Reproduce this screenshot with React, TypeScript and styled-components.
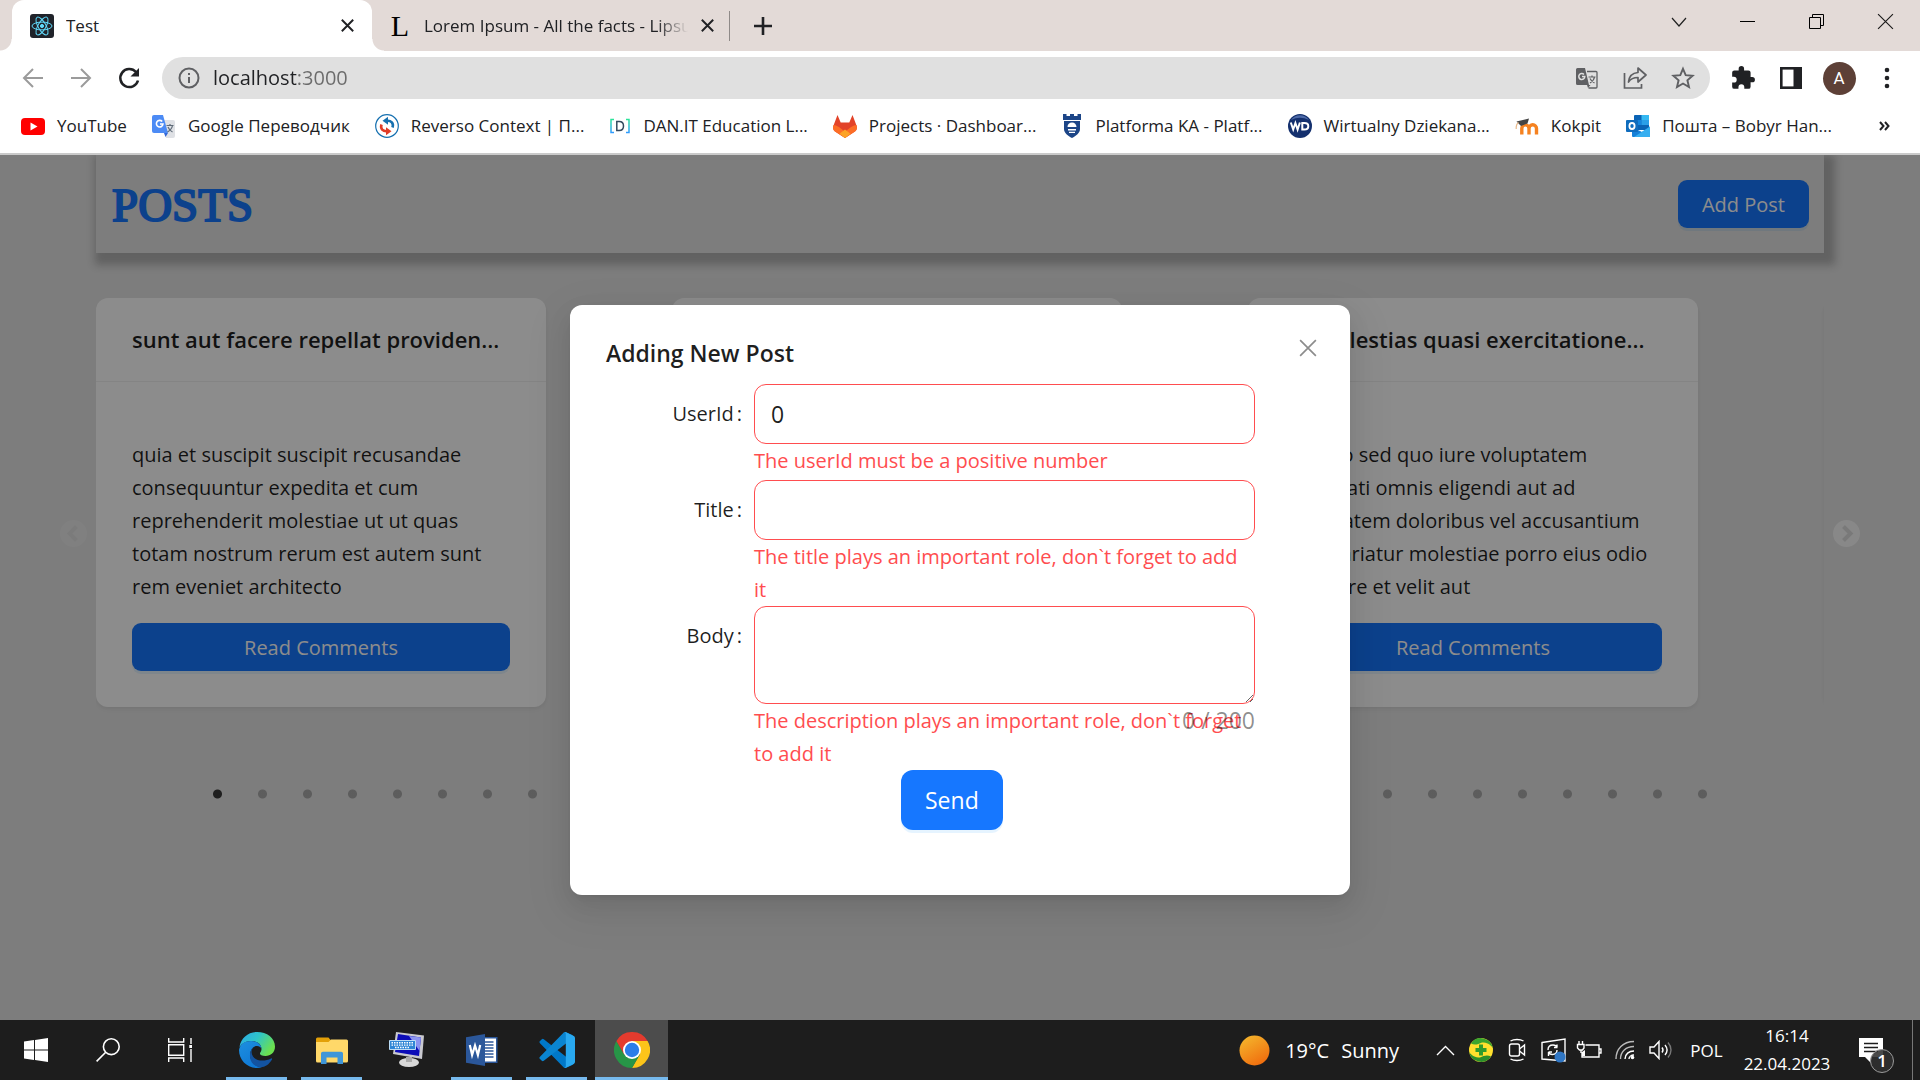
import React, { useState } from "react";
import styled, { createGlobalStyle, css } from "styled-components";

const SANS = `"Open Sans", "Noto Sans", "Liberation Sans", sans-serif`;

const GlobalStyle = createGlobalStyle`
  *, *::before, *::after { box-sizing: border-box; }
  body {
    margin: 0;
    font-family: ${SANS};
    color: rgba(0, 0, 0, 0.88);
    background: #e3e3e3;
  }
  button, input, textarea { font-family: inherit; }
`;

const Screen = styled.div`
  min-height: 100vh;
  display: flex;
  flex-direction: column;
`;

const PlainButton = styled.button`
  display: flex;
  align-items: center;
  justify-content: center;
  padding: 0;
  border: 0;
  background: none;
  color: inherit;
  cursor: pointer;
`;

/* ---------- Browser frame ---------- */

const BrowserFrame = styled.header`
  background: #fff;
  border-bottom: 2px solid #cacaca;
`;

const TabStrip = styled.div`
  display: flex;
  align-items: center;
  height: 51px;
  padding-left: 12px;
  background: #e3dad7;
`;

const Tab = styled.div<{ $active?: boolean }>`
  position: relative;
  display: flex;
  align-items: center;
  gap: 12px;
  align-self: stretch;
  width: ${(p) => (p.$active ? 360 : 358)}px;
  padding: 0 ${(p) => (p.$active ? 18 : 16)}px 0 ${(p) => (p.$active ? 18 : 16)}px;
  color: #202124;
  ${(p) =>
    p.$active
      ? css`
          background: #fff;
          border-radius: 12px 12px 0 0;
          &::before,
          &::after {
            content: "";
            position: absolute;
            bottom: 0;
            width: 12px;
            height: 12px;
          }
          &::before {
            left: -12px;
            background: radial-gradient(circle at 0 0, transparent 11px, #fff 12px);
          }
          &::after {
            right: -12px;
            background: radial-gradient(circle at 100% 0, transparent 11px, #fff 12px);
          }
        `
      : css`
          &::after {
            content: "";
            position: absolute;
            right: 0;
            top: 11px;
            width: 1px;
            height: 30px;
            background: #8f8a88;
          }
        `}
`;

const TabTitle = styled.span<{ $fade?: boolean }>`
  flex: 1;
  overflow: hidden;
  white-space: nowrap;
  font-size: 17px;
  line-height: 24px;
  ${(p) => p.$fade && "mask-image: linear-gradient(90deg, #000 88%, transparent);"}
`;

const TabClose = styled(PlainButton)`
  width: 14px;
  height: 24px;
`;

const NewTab = styled(PlainButton)`
  width: 66px;
  height: 50px;
`;

const WindowControls = styled.div`
  display: flex;
  align-self: flex-start;
  margin-left: auto;
`;

const WindowButton = styled(PlainButton)`
  width: 69px;
  height: 43px;
`;

const Toolbar = styled.div`
  display: flex;
  align-items: center;
  padding: 6px 9px;
`;

const ToolButton = styled(PlainButton)<{ $muted?: boolean }>`
  width: 48px;
  height: 42px;
  color: ${(p) => (p.$muted ? "#9b9b9b" : "#202124")};
`;

const Omnibox = styled.div`
  display: flex;
  align-items: center;
  flex: 1;
  height: 42px;
  margin: 0 9px;
  padding: 0 3px;
  border-radius: 21px;
  background: #e0e0e0;
`;

const OmniButton = styled(ToolButton)`
  color: #5f6063;
`;

const Address = styled.input`
  flex: 1;
  min-width: 0;
  padding: 0;
  border: 0;
  outline: none;
  font-size: 20px;
  line-height: 30px;
  color: transparent;
  background: linear-gradient(90deg, #202124 84px, #6b6b6b 84px);
  background-clip: text;
`;

const Avatar = styled.span`
  display: flex;
  align-items: center;
  justify-content: center;
  width: 33px;
  height: 33px;
  border-radius: 50%;
  background: #5d4037;
  color: #fff;
  font-family: Roboto, sans-serif;
  font-size: 17px;
`;

const Bookmarks = styled.nav`
  display: flex;
  align-items: center;
  gap: 25px;
  height: 48px;
  padding: 0 30px 6px 21px;
`;

const Bookmark = styled.a`
  display: flex;
  align-items: center;
  gap: 12px;
  white-space: nowrap;
  font-size: 17px;
  line-height: 24px;
  color: #202124;
  text-decoration: none;
`;

const MoreBookmarks = styled(PlainButton)`
  margin-left: auto;
`;

/* ---------- Posts page ---------- */

const Page = styled.main`
  position: relative;
  flex: 1;
  overflow: hidden;
  background: #e3e3e3;
`;

const PageHeader = styled.div`
  display: flex;
  align-items: center;
  justify-content: space-between;
  height: 98px;
  margin: 0 5%;
  padding: 0 15px 0 16px;
  box-shadow: 5px 6px 8px 6px rgba(0, 0, 0, 0.22);
`;

const PageTitle = styled.h1`
  margin: 0;
  padding-top: 2px;
  font-family: "Liberation Serif", serif;
  font-size: 47px;
  font-weight: 400;
  line-height: 60px;
  color: #1677ff;
  -webkit-text-stroke: 2px #1677ff;
`;

const PrimaryButton = styled.button<{ $large?: boolean; $block?: boolean }>`
  display: ${(p) => (p.$block ? "block" : "inline-block")};
  width: ${(p) => (p.$block ? "100%" : "auto")};
  height: ${(p) => (p.$large ? 60 : 48)}px;
  padding: 0 24px;
  border: 0;
  border-radius: ${(p) => (p.$large ? 12 : 9)}px;
  background: #1677ff;
  box-shadow: 0 3px 0 rgba(5, 145, 255, 0.1);
  color: #fff;
  font-size: ${(p) => (p.$large ? 23 : 20)}px;
  cursor: pointer;
`;

const Carousel = styled.section`
  display: grid;
  grid-template-columns: 5% minmax(0, 1fr) 5%;
  margin-top: 35px;
`;

const ArrowCell = styled.div<{ $side: "left" | "right" }>`
  display: flex;
  align-items: center;
  justify-content: ${(p) => (p.$side === "left" ? "flex-end" : "flex-start")};
  padding: 0 9px;
`;

const ArrowButton = styled(PlainButton)<{ $dim?: boolean }>`
  opacity: ${(p) => (p.$dim ? 0.25 : 0.75)};
`;

const Track = styled.div`
  display: flex;
  overflow: hidden;
  padding: 10px 0 71px;
`;

const Slide = styled.div`
  display: flex;
  flex: 0 0 calc(100% / 3);
`;

const Card = styled.article`
  width: 450px;
  border-radius: 12px;
  background: #fff;
  box-shadow: 0 2px 3px 0 rgba(0, 0, 0, 0.03), 0 2px 9px -2px rgba(0, 0, 0, 0.02),
    0 3px 6px 0 rgba(0, 0, 0, 0.02);
`;

const CardTitle = styled.h2`
  margin: 0;
  padding: 23px 36px 24px;
  border-bottom: 1px solid #f0f0f0;
  overflow: hidden;
  white-space: nowrap;
  font-size: 22px;
  font-weight: 600;
  line-height: 36px;
`;

const CardBody = styled.div`
  padding: 36px;
`;

const CardText = styled.p`
  margin: 20px 0;
  font-size: 20px;
  line-height: 33px;
  white-space: pre-line;
`;

const Dots = styled.ul`
  display: flex;
  justify-content: center;
  margin: 0;
  padding: 0;
  list-style: none;
`;

const Dot = styled.button<{ $active?: boolean }>`
  display: block;
  width: 45px;
  height: 32px;
  padding: 0;
  border: 0;
  background: radial-gradient(circle, #000 4px, transparent 5px);
  opacity: ${(p) => (p.$active ? 0.75 : 0.25)};
`;

/* ---------- Modal ---------- */

const Mask = styled.div`
  position: absolute;
  inset: 0;
  display: flex;
  align-items: flex-start;
  justify-content: center;
  padding: 150px 24px 0;
  background: rgba(0, 0, 0, 0.45);
`;

const Dialog = styled.div`
  position: relative;
  width: 780px;
  padding: 30px 36px 65px;
  border-radius: 12px;
  background: #fff;
  box-shadow: 0 9px 24px 0 rgba(0, 0, 0, 0.08), 0 5px 9px -6px rgba(0, 0, 0, 0.12),
    0 14px 42px 12px rgba(0, 0, 0, 0.05);
`;

const DialogTitle = styled.h2`
  margin: 0 0 13px;
  font-size: 23px;
  font-weight: 600;
  line-height: 36px;
`;

const DialogClose = styled(PlainButton)`
  position: absolute;
  top: 26px;
  right: 26px;
  width: 33px;
  height: 33px;
  color: rgba(0, 0, 0, 0.45);
`;

const Form = styled.form`
  padding-right: 59px;
`;

const Field = styled.div`
  display: grid;
  grid-template-columns: 148px minmax(0, 1fr);
`;

const Label = styled.label`
  padding-right: 12px;
  text-align: right;
  font-size: 20px;
  line-height: 60px;

  &::after {
    content: ":";
    margin-left: 3px;
  }
`;

const Control = styled.div`
  position: relative;
`;

const fieldBox = css`
  display: block;
  width: 100%;
  border: 1px solid #ff4d4f;
  border-radius: 12px;
  outline: none;
  background: #fff;
  color: rgba(0, 0, 0, 0.88);
  font-size: 23px;
`;

const TextInput = styled.input`
  ${fieldBox}
  height: 60px;
  padding: 0 16px;
`;

const TextArea = styled.textarea`
  ${fieldBox}
  height: 98px;
  padding: 10px 16px;
  resize: vertical;
`;

const Counter = styled.span`
  position: absolute;
  right: 0;
  top: 98px;
  font-size: 23px;
  line-height: 33px;
  color: rgba(0, 0, 0, 0.45);
`;

const ErrorText = styled.div`
  min-height: 36px;
  padding-right: 9px;
  font-size: 20px;
  line-height: 33px;
  color: #ff4d4f;
`;

const SubmitRow = styled.div`
  padding-left: 295px;
`;

/* ---------- Taskbar ---------- */

const TaskbarRoot = styled.footer`
  display: flex;
  height: 60px;
  background: #1d1d1d;
  color: #fff;
`;

const SystemButton = styled(PlainButton)`
  width: 72px;
`;

const Apps = styled.div`
  display: flex;
  gap: 2px;
  margin-left: 4px;
`;

const AppButton = styled(PlainButton)<{ $running?: boolean; $focused?: boolean }>`
  width: 73px;
  background: ${(p) => (p.$focused ? "#4c4c4c" : "none")};
  ${(p) =>
    p.$running &&
    css`
      background-image: linear-gradient(#76b9ed, #76b9ed);
      background-repeat: no-repeat;
      background-position: 50% 100%;
      background-size: ${p.$focused ? "100%" : "61px"} 3px;
    `}
`;

const Weather = styled(PlainButton)`
  gap: 15px;
  margin-left: auto;
  padding-right: 28px;
  font-size: 20px;
  white-space: nowrap;
`;

const WeatherText = styled.span`
  display: flex;
  gap: 12px;
`;

const TrayButton = styled(PlainButton)`
  width: 36px;
`;

const Language = styled(PlainButton)`
  width: 55px;
  font-size: 17px;
`;

const Clock = styled.time`
  display: flex;
  flex-direction: column;
  justify-content: center;
  width: 106px;
  text-align: center;
  font-size: 17px;
  line-height: 28px;
`;

const Notifications = styled(PlainButton)`
  position: relative;
  width: 72px;
  padding-right: 10px;
`;

const Badge = styled.span`
  position: absolute;
  left: 30px;
  top: 29px;
  width: 24px;
  height: 24px;
  border: 1px solid #9a9a9a;
  border-radius: 50%;
  background: rgba(48, 48, 48, 0.88);
  font-size: 17px;
  font-weight: 600;
  line-height: 22px;
`;

const ShowDesktop = styled(PlainButton)`
  width: 8px;
  border-left: 1px solid #777;
`;

/* ---------- Icons ---------- */

const CrossIcon = ({ size, stroke }: { size: number; stroke: number }) => (
  <svg width={size} height={size} viewBox="0 0 16 16" fill="none" stroke="currentColor" strokeWidth={stroke}>
    <path d="M1 1l14 14M15 1L1 15" />
  </svg>
);

const ReactIcon = () => (
  <svg width="24" height="24" viewBox="0 0 24 24" fill="none" stroke="#61dafb" strokeWidth="1">
    <rect width="24" height="24" rx="3" fill="#20232a" stroke="none" />
    <ellipse cx="12" cy="12" rx="10" ry="3.9" />
    <ellipse cx="12" cy="12" rx="10" ry="3.9" transform="rotate(60 12 12)" />
    <ellipse cx="12" cy="12" rx="10" ry="3.9" transform="rotate(120 12 12)" />
    <circle cx="12" cy="12" r="1.6" fill="#61dafb" />
  </svg>
);

const LetterIcon = styled.span`
  width: 24px;
  text-align: center;
  font-family: "Liberation Serif", serif;
  font-size: 30px;
  line-height: 24px;
  color: #000;
`;

const YouTubeIcon = () => (
  <svg width="24" height="24" viewBox="0 0 24 24">
    <rect y="4" width="24" height="17" rx="4" fill="#f00" />
    <path d="M9.5 8.5v8l7-4z" fill="#fff" />
  </svg>
);

const GTranslateColor = () => (
  <svg width="24" height="24" viewBox="0 0 24 24">
    <path d="M10 6h11a2 2 0 0 1 2 2v14a2 2 0 0 1-2 2h-7z" fill="#dfe1e5" />
    <path d="M12 19h4l-2.500 4z" fill="#3367d6" />
    <path d="M2 1h9l5 18H2a2 2 0 0 1-2-2V3a2 2 0 0 1 2-2z" fill="#4c8bf5" />
    <path d="M10.200 7.500A3.300 3.300 0 1 0 11 10H8" fill="none" stroke="#fff" strokeWidth="1.600" />
    <path d="M14.500 11.500h7M18 10v1.500M20.500 11.500c-.5 3-2.500 5-5 6.500M16 13c.8 2 2.500 4 4.500 5" fill="none" stroke="#5f6b78" strokeWidth="1.200" />
  </svg>
);

const ReversoIcon = () => (
  <svg width="24" height="24" viewBox="0 0 24 24" fill="none">
    <circle cx="12" cy="12" r="11.300" fill="#fff" stroke="#1670b0" strokeWidth="1.200" />
    <path d="M17.500 13.500c1.500-4.500-1.500-7-5.500-6.700" stroke="#1670b0" strokeWidth="2.600" />
    <path d="M13 2.800v8L7.500 6.800z" fill="#1670b0" />
    <path d="M6.500 10.500c-1.500 4.500 1.500 7 5.500 6.700" stroke="#e03c28" strokeWidth="2.600" />
    <path d="M11 13.200v8l5.500-4z" fill="#e03c28" />
  </svg>
);

const DanIcon = () => (
  <svg width="22" height="24" viewBox="0 0 22 24" fill="none" strokeWidth="1.500">
    <defs>
      <linearGradient id="dan" x1="0" y1="0" x2="0" y2="1">
        <stop offset="0" stopColor="#2be39a" />
        <stop offset="1" stopColor="#2f9bff" />
      </linearGradient>
    </defs>
    <path d="M5 5.500H2v13h3M17 5.500h3v13h-3" stroke="url(#dan)" />
    <path d="M7.800 7.500v9h2.400c2.800 0 4.300-1.800 4.300-4.500s-1.500-4.500-4.300-4.500z" stroke="#34495e" />
  </svg>
);

const GitLabIcon = () => (
  <svg width="24" height="24" viewBox="0 0 24 24">
    <path d="M4.500 1L7.700 8.500h8.600L19.500 1l4 10.500c.9 2.700.1 4.700-1.500 6L12 24 2 17.500C.4 16.200-.4 14.200.5 11.500z" fill="#e24329" />
    <path d="M.5 11c2 0 4 1 5.800 2.300L12 17.800l5.700-4.500C19.500 12 21.500 11 23.500 11c.9 2.700.3 5-1.500 6.500L12 24 2 17.500C.2 16-.4 13.700.5 11z" fill="#fc6d26" />
    <path d="M12 15.500l5.500 4.200L12 24l-5.500-4.300z" fill="#fca326" />
  </svg>
);

const CastleIcon = () => (
  <svg width="22" height="24" viewBox="0 0 22 24">
    <path d="M2 0h3.500v2H9V0h4v2h3.500V0H20v6h-1v9c0 4-4 7-8 9-4-2-8-5-8-9V6H2z" fill="#1c4587" />
    <path d="M3 6.500h16" stroke="#fff" strokeWidth="1" />
    <path d="M6.500 13c0-3 2-4.500 4.500-4.500s4.500 2 4.500 4.500zM7 15h8v1.500H7zM8 17.800h6v1.200H8z" fill="#fff" />
  </svg>
);

const WdIcon = () => (
  <svg width="24" height="24" viewBox="0 0 24 24">
    <circle cx="12" cy="12" r="12" fill="#14306e" />
    <path d="M3 6a11 11 0 0 1 18 0 20 20 0 0 0-18 0z" fill="#4d6aa8" />
    <path d="M2.800 8.500l2.400 7 2.200-6.500 2.200 6.500 2.300-7" fill="none" stroke="#fff" strokeWidth="2" />
    <path d="M14.300 9v6.500h2c2.600 0 4-1.300 4-3.300S18.900 9 16.300 9z" fill="none" stroke="#fff" strokeWidth="2" />
  </svg>
);

const MoodleIcon = () => (
  <svg width="24" height="24" viewBox="0 0 24 24" fill="none">
    <path d="M6.800 20.500v-6a3.600 3.600 0 0 1 7.200 0v6M14 14.500a3.600 3.600 0 0 1 7.500 0v6" stroke="#f58220" strokeWidth="3.400" />
    <path d="M1.500 7.500L14 4.500l-1.500 5-6.500 2.500z" fill="#444" />
    <path d="M3.500 8.500C1.500 10 1 12 1.200 15" stroke="#e8b98a" strokeWidth="1.200" />
  </svg>
);

const OutlookIcon = () => (
  <svg width="24" height="24" viewBox="0 0 24 24">
    <rect x="8" y="1" width="15" height="15" rx="1" fill="#0a63b5" />
    <path d="M8 6h7.500v5H8z" fill="#1385dd" />
    <path d="M15.500 1H23v5h-7.500z" fill="#35b8f1" />
    <path d="M15.500 6H23v5h-7.500z" fill="#2a9fe8" />
    <path d="M6 13l10 5 8-5.500V22a1 1 0 0 1-1 1H7a1 1 0 0 1-1-1z" fill="#1580d8" />
    <path d="M24 12.500V22a1 1 0 0 1-1 1H8z" fill="#35aef0" />
    <rect y="6" width="12" height="12" rx="1" fill="#0f6cbd" />
    <ellipse cx="6" cy="12" rx="2.600" ry="3" fill="none" stroke="#fff" strokeWidth="1.800" />
  </svg>
);

const ArrowIcon = ({ flip }: { flip?: boolean }) => (
  <svg width="22" height="22" viewBox="0 0 22 22" fill="none" stroke="currentColor" strokeWidth="2">
    <path d={flip ? "M1 11h19M11 2l9 9-9 9" : "M21 11H2M11 2l-9 9 9 9"} />
  </svg>
);

const ReloadIcon = () => (
  <svg width="24" height="24" viewBox="0 0 24 24" fill="none">
    <path d="M21 14.500A9 9 0 1 1 19 6" stroke="currentColor" strokeWidth="2.500" />
    <path d="M22 2v8.500h-8.500z" fill="currentColor" />
  </svg>
);

const InfoIcon = () => (
  <svg width="22" height="22" viewBox="0 0 22 22" fill="none" stroke="currentColor" strokeWidth="2">
    <circle cx="11" cy="11" r="9.500" />
    <path d="M11 10v6M11 6v2" />
  </svg>
);

const TranslateIcon = () => (
  <svg width="22" height="22" viewBox="0 0 22 22" fill="none">
    <path d="M11 4.500h9a1 1 0 0 1 1 1V20a1 1 0 0 1-1 1h-7.500" stroke="currentColor" strokeWidth="1.300" />
    <path d="M1.500 1H9l4 17H1.500A1.500 1.500 0 0 1 0 16.500v-14A1.500 1.500 0 0 1 1.500 1zM11 18h3.500L12 21z" fill="currentColor" />
    <path d="M8 7.500A3 3 0 1 0 8.800 9.600H6" stroke="#e0e0e0" strokeWidth="1.500" />
    <path d="M12.500 10h7M16 8.500V10M18.500 10c-.5 3-2 4.500-4.500 6M14 11.500c.8 1.800 2.200 3.300 4.500 4.500" stroke="currentColor" strokeWidth="1.200" />
  </svg>
);

const ShareIcon = () => (
  <svg width="24" height="24" viewBox="0 0 24 24" fill="none" stroke="currentColor" strokeWidth="1.700">
    <path d="M1.500 7v15h17v-4" />
    <path d="M15 2l8 7-8 7v-4.500c-4.500 0-7.500 1.500-9.500 4.500.5-5.500 3.500-9 9.500-9.500z" strokeLinejoin="round" />
  </svg>
);

const StarIcon = () => (
  <svg width="24" height="24" viewBox="0 0 24 24" fill="none" stroke="currentColor" strokeWidth="1.900">
    <path d="M12 2.800l2.700 6.400 6.900.6-5.200 4.500 1.600 6.800-6-3.600-6 3.600 1.600-6.800L2.400 9.800l6.900-.6z" />
  </svg>
);

const PuzzleIcon = () => (
  <svg width="26" height="26" viewBox="0 0 24 24" fill="currentColor">
    <path d="M20.500 11H19V7a2 2 0 0 0-2-2h-4V3.500a2.500 2.500 0 0 0-5 0V5H4a2 2 0 0 0-2 2v3.800h1.500a2.700 2.700 0 0 1 0 5.400H2V20a2 2 0 0 0 2 2h3.800v-1.500a2.700 2.700 0 0 1 5.400 0V22H17a2 2 0 0 0 2-2v-4h1.500a2.500 2.500 0 0 0 0-5z" />
  </svg>
);

const SidePanelIcon = () => (
  <svg width="22" height="22" viewBox="0 0 22 22">
    <rect x="1.300" y="1.300" width="19.400" height="19.400" fill="none" stroke="currentColor" strokeWidth="2.600" />
    <path d="M13.500 0H22v22h-8.500z" fill="currentColor" />
  </svg>
);

const MenuDots = () => (
  <svg width="6" height="22" viewBox="0 0 6 22" fill="currentColor">
    <circle cx="3" cy="3" r="2.300" />
    <circle cx="3" cy="11" r="2.300" />
    <circle cx="3" cy="19" r="2.300" />
  </svg>
);

const DoubleChevron = () => (
  <svg width="11" height="10" viewBox="0 0 11 10" fill="none" stroke="#202124" strokeWidth="2">
    <path d="M1 1l3.500 4L1 9M6 1l3.500 4L6 9" />
  </svg>
);

const CircleArrow = ({ left }: { left?: boolean }) => (
  <svg width="27" height="27" viewBox="0 0 27 27" fill="none">
    <circle cx="13.500" cy="13.500" r="13.500" fill="#fff" />
    <path d={left ? "M16.500 6.500l-7 7 7 7" : "M10.500 6.500l7 7-7 7"} stroke="#dcdcdc" strokeWidth="4" />
  </svg>
);

const WindowsIcon = () => (
  <svg width="24" height="24" viewBox="0 0 24 24" fill="#fff">
    <path d="M0 3.400L10 2v9.500H0zM11 1.900L24 0v11.500H11zM0 12.500h10V22L0 20.600zM11 12.500h13V24l-13-1.900z" />
  </svg>
);

const SearchIcon = () => (
  <svg width="24" height="24" viewBox="0 0 24 24" fill="none" stroke="#fff" strokeWidth="1.600">
    <circle cx="15.300" cy="8.700" r="7.900" />
    <path d="M9.700 14.300L.6 23.400" />
  </svg>
);

const TaskViewIcon = () => (
  <svg width="24" height="24" viewBox="0 0 24 24" fill="none" stroke="#fff" strokeWidth="1.400">
    <path d="M.7 0v4h15V0M.7 24v-4h15v4M.7 6.700h15v10.600H.7zM23 0v6M23 11v13" />
    <path d="M21.300 7h3v3h-3z" fill="#fff" stroke="none" />
  </svg>
);

const EdgeIcon = () => (
  <svg width="36" height="36" viewBox="0 0 36 36">
    <defs>
      <linearGradient id="edgeTop" x1="0" y1="0" x2="1" y2=".5">
        <stop offset="0" stopColor="#2aa7ea" />
        <stop offset=".5" stopColor="#2fc5c8" />
        <stop offset="1" stopColor="#6be04f" />
      </linearGradient>
      <linearGradient id="edgeLeft" x1="0" y1="0" x2=".6" y2="1">
        <stop offset="0" stopColor="#1d8fe0" />
        <stop offset="1" stopColor="#0f78d4" />
      </linearGradient>
    </defs>
    <path d="M.5 15C2 6 9 0 18 0c10 0 18 6 18 14.500 0 6-4.500 9.500-9.500 9.500-4 0-6-1.500-5.500-3 1-1.500 1.500-2.500 1.500-4 0-5-4.500-8-10-8-6 0-10 3-12 6z" fill="url(#edgeTop)" />
    <path d="M0 18C1 12 6 9 12 9c5.500 0 10.500 3 10.500 8 0-2-3-3.500-5.500-3-4 1-7 6-5.500 12 1.500 5.500 6 9 11.500 9.200-1.500.5-3.200.8-5 .8C8 36 0 28 0 18z" fill="url(#edgeLeft)" />
    <path d="M14.500 15c-2.500 3-2.500 6.500-.5 9.500 3 4.500 11.500 5.500 18 2 .8-.4 1.500.2 1 1C30 32.500 26 35.200 22 35.200 16 35 11.500 31 11 25c-.3-4 .8-7.500 3.500-10z" fill="#1353a0" />
  </svg>
);

const FolderIcon = () => (
  <svg width="32" height="27" viewBox="0 0 32 27">
    <path d="M0 2a1.500 1.500 0 0 1 1.500-1.500h11L15 3.500V7H0z" fill="#e3a008" />
    <path d="M0 5h12.500L15 2.500h15.500A1.500 1.500 0 0 1 32 4v20a1.500 1.500 0 0 1-1.500 1.500h-29A1.500 1.500 0 0 1 0 24z" fill="#ffd869" />
    <path d="M5 27V16.500A1.800 1.800 0 0 1 6.800 14.700h18.400a1.800 1.800 0 0 1 1.800 1.800V27h-5.500v-6.500h-11V27z" fill="#3f96d8" />
  </svg>
);

const KeyboardPcIcon = () => (
  <svg width="36" height="36" viewBox="0 0 36 36">
    <path d="M7 0l28 3.500L33 27 4 22z" fill="#c9c9cf" />
    <path d="M9 2l23 3.500-2 18.500L6 20z" fill="#0c0cb8" />
    <path d="M20 4l12 1.500-1.500 13.500z" fill="#8b94f0" />
    <ellipse cx="20" cy="30.500" rx="10" ry="4.500" fill="#d8d8d8" />
    <path d="M17 25h6v5h-6z" fill="#aaa" />
    <path d="M.5 8.500h26v9H.5z" fill="#2f86d6" stroke="#bcdcf6" />
    <path d="M2.500 10.700h22M2.500 13.100h22M6 15.500h15" stroke="#fff" strokeWidth="1.400" strokeDasharray="1.500 1" />
  </svg>
);

const WordIcon = () => (
  <svg width="32" height="32" viewBox="0 0 32 32">
    <path d="M17 3h14.500v26H17z" fill="#2b579a" />
    <path d="M17 4.500h13v23H17z" fill="#fff" />
    <path d="M19 8h8.500M19 11h8.500M19 14h8.500M19 17h8.500M19 20h8.500M19 23h8.500" stroke="#2b579a" strokeWidth="1.600" />
    <path d="M0 3.300L19 0v32L0 28.700z" fill="#2b579a" />
    <path d="M3.800 11l2.300 10L9 11.500l2.900 9.500L14.200 11" fill="none" stroke="#fff" strokeWidth="2.200" />
  </svg>
);

const VsCodeIcon = () => (
  <svg width="36" height="36" viewBox="0 0 36 36">
    <path d="M1 11.200a1.600 1.600 0 0 1 0-2.300l1.800-1.600a1.500 1.500 0 0 1 2 0L34 30.200c1 1 0 2.300-.8 2.700L27 35.700a2.200 2.200 0 0 1-2.500-.5z" fill="#0078c8" />
    <path d="M1 24.800a1.600 1.600 0 0 0 0 2.300l1.800 1.600a1.500 1.500 0 0 0 2 0L34 6c0-1.500 0-2.300-.8-2.900L27 .3a2.200 2.200 0 0 0-2.500.5z" fill="#0a85d1" />
    <path d="M24.500.8C25.300 0 26.300 0 27 .3l7.800 3.700A2.200 2.200 0 0 1 36 6v24a2.200 2.200 0 0 1-1.200 2L27 35.700c-.9.400-1.800.2-2.500-.5.900.9 2.300.3 2.300-1V1.800c0-1.300-1.400-1.900-2.300-1z" fill="#29a9f0" />
  </svg>
);

const ChromeIcon = () => (
  <svg width="36" height="36" viewBox="0 0 36 36">
    <path d="M18 9h15.590A18 18 0 0 1 18 36l7.800-13.500z" fill="#fcc419" />
    <path d="M10.200 22.500L2.410 9A18 18 0 0 0 18 36l7.800-13.500z" fill="#279547" />
    <path d="M10.200 22.500L2.410 9A18 18 0 0 1 33.590 9H18z" fill="#e33b2e" />
    <circle cx="18" cy="18" r="9" fill="#fff" />
    <circle cx="18" cy="18" r="7.200" fill="#2b7de9" />
  </svg>
);

const SunIcon = () => (
  <svg width="31" height="31" viewBox="0 0 31 31">
    <defs>
      <linearGradient id="sun" x1=".2" y1="0" x2=".8" y2="1">
        <stop offset="0" stopColor="#f4b52c" />
        <stop offset="1" stopColor="#f0690c" />
      </linearGradient>
    </defs>
    <circle cx="15.500" cy="15.500" r="15" fill="url(#sun)" />
  </svg>
);

const lineIcon = { fill: "none", stroke: "#fff", strokeWidth: 1.4 };

const TrayChevron = () => (
  <svg width="19" height="11" viewBox="0 0 19 11" {...lineIcon}>
    <path d="M1 10l8.500-8.500L18 10" />
  </svg>
);

const PlusShield = () => (
  <svg width="24" height="24" viewBox="0 0 24 24">
    <circle cx="12" cy="12" r="12" fill="#ffe02e" />
    <path d="M2 5.500A12 12 0 0 1 23.800 10C21 6 18 4.500 13 4.500 9 6.500 5.500 7.500 2 5.500z" fill="#3aa52f" />
    <path d="M.2 14C3 18 6 19.500 11 19.500c4-2 7.500-3 11-1A12 12 0 0 1 .2 14z" fill="#2b8f2b" />
    <path d="M10 6.500h4V10h3.500v4H14v3.500h-4V14H6.500v-4H10z" fill="#2f9c2c" />
  </svg>
);

const CameraIcon = () => (
  <svg width="18" height="24" viewBox="0 0 18 24" {...lineIcon}>
    <rect x="1.500" y="6" width="10" height="12" rx="2" />
    <path d="M11.500 11l5-4v10l-5-4M2.500 3c3.500-2 9.500-2 13 0M2.500 21c3.500 2 9.500 2 13 0" />
  </svg>
);

const SyncIcon = () => (
  <svg width="25" height="25" viewBox="0 0 25 25" {...lineIcon}>
    <path d="M1 4.500L24 1v22L1 21z" />
    <path d="M7 12c0-3 2-5 5-5 2 0 3.500 1 4 2.500V6.500M16.500 9.500H13M16 12c0 3-1.500 4.500-4.500 4.500-2 0-3.500-1-4-2.500v4M7.500 14H11" />
    <circle cx="19" cy="19" r="5.500" fill="#2f76c4" stroke="none" />
  </svg>
);

const BatteryIcon = () => (
  <svg width="26" height="20" viewBox="0 0 26 20" {...lineIcon}>
    <path d="M9.500 5H23v12H6V12M23 9h2v4h-2" />
    <path d="M3 1v3M6.500 1v3M1.500 4.500h6.500V8L6.500 10h-3L1.500 8zM5 10v3" />
    <path d="M6 12l3-2v6H6z" fill="#fff" stroke="none" />
  </svg>
);

const WifiIcon = () => (
  <svg width="20" height="20" viewBox="0 0 20 20" {...lineIcon}>
    <path d="M1 19C1 9 8 1.500 19 1.500M5.500 19C5.500 11.500 11 6.500 19 6.500" stroke="#bbb" />
    <path d="M10 19c0-5 4-8 9-8M14 19c0-2 2-4 5-4" />
    <circle cx="17.500" cy="17.500" r="1.800" fill="#fff" stroke="none" />
  </svg>
);

const VolumeIcon = () => (
  <svg width="24" height="20" viewBox="0 0 24 20" {...lineIcon}>
    <path d="M1 7h4l5-5.500v17L5 13H1z" />
    <path d="M13 7.500c1.200 1.500 1.200 3.500 0 5M16 5c2.500 3 2.500 7 0 10" />
    <path d="M19 2.500c4 4.500 4 10.500 0 15" stroke="#777" />
  </svg>
);

const BubbleIcon = () => (
  <svg width="24" height="25" viewBox="0 0 24 25">
    <path d="M0 0h24v19H12v6l-6-6H0z" fill="#fff" />
    <path d="M5 5.500h14M5 9.500h14M5 13.500h14" stroke="#1d1d1d" strokeWidth="1.400" />
  </svg>
);

/* ---------- Data ---------- */

const bookmarks = [
  { label: "YouTube", icon: <YouTubeIcon /> },
  { label: "Google Переводчик", icon: <GTranslateColor /> },
  { label: "Reverso Context | П...", icon: <ReversoIcon /> },
  { label: "DAN.IT Education L...", icon: <DanIcon /> },
  { label: "Projects · Dashboar...", icon: <GitLabIcon /> },
  { label: "Platforma KA - Platf...", icon: <CastleIcon /> },
  { label: "Wirtualny Dziekana...", icon: <WdIcon /> },
  { label: "Kokpit", icon: <MoodleIcon /> },
  { label: "Пошта – Bobyr Han...", icon: <OutlookIcon /> },
];

const posts = [
  {
    title: "sunt aut facere repellat providen...",
    body: "quia et suscipit suscipit recusandae\nconsequuntur expedita et cum\nreprehenderit molestiae ut ut quas\ntotam nostrum rerum est autem sunt\nrem eveniet architecto",
  },
  {
    title: "qui est esse",
    body: "est rerum tempore vitae sequi sint\nnihil reprehenderit dolor beatae ea\ndolores neque fugiat blanditiis\nvoluptate porro vel nihil molestiae\nut reiciendis",
  },
  {
    title: "ea molestias quasi exercitatione...",
    body: "et iusto sed quo iure voluptatem\noccaecati omnis eligendi aut ad\nvoluptatem doloribus vel accusantium\nquis pariatur molestiae porro eius odio\net labore et velit aut",
  },
];

const apps = [
  { label: "Edge", icon: <EdgeIcon />, running: true },
  { label: "File Explorer", icon: <FolderIcon />, running: true },
  { label: "Keyboard", icon: <KeyboardPcIcon /> },
  { label: "Word", icon: <WordIcon />, running: true },
  { label: "Visual Studio Code", icon: <VsCodeIcon />, running: true },
  { label: "Chrome", icon: <ChromeIcon />, running: true, focused: true },
];

const tray = [
  { label: "Hidden icons", icon: <TrayChevron /> },
  { label: "Antivirus", icon: <PlusShield /> },
  { label: "Camera", icon: <CameraIcon /> },
  { label: "Updates", icon: <SyncIcon /> },
  { label: "Battery", icon: <BatteryIcon /> },
  { label: "Network", icon: <WifiIcon /> },
  { label: "Volume", icon: <VolumeIcon /> },
];

const PAGE_COUNT = 34;

/* ---------- Sections ---------- */

function Browser() {
  return (
    <BrowserFrame>
      <TabStrip>
        <Tab $active>
          <ReactIcon />
          <TabTitle>Test</TabTitle>
          <TabClose aria-label="Close tab">
            <CrossIcon size={13} stroke={2.4} />
          </TabClose>
        </Tab>
        <Tab>
          <LetterIcon aria-hidden>L</LetterIcon>
          <TabTitle $fade>Lorem Ipsum - All the facts - Lipsum</TabTitle>
          <TabClose aria-label="Close tab">
            <CrossIcon size={13} stroke={2.4} />
          </TabClose>
        </Tab>
        <NewTab aria-label="New tab">
          <svg width="18" height="18" viewBox="0 0 18 18" stroke="#202124" strokeWidth="2.6">
            <path d="M9 0v18M0 9h18" />
          </svg>
        </NewTab>
        <WindowControls>
          <WindowButton aria-label="Search tabs">
            <svg width="16" height="10" viewBox="0 0 16 10" fill="none" stroke="#222" strokeWidth="1.2">
              <path d="M1 1l7 8 7-8" />
            </svg>
          </WindowButton>
          <WindowButton aria-label="Minimize">
            <svg width="15" height="1" viewBox="0 0 15 1">
              <rect width="15" height="1" fill="#000" />
            </svg>
          </WindowButton>
          <WindowButton aria-label="Restore">
            <svg width="15" height="15" viewBox="0 0 15 15" fill="none" stroke="#000">
              <path d="M.5 3.500h11v11H.5zM3.500 3.500v-3h11v11h-3" />
            </svg>
          </WindowButton>
          <WindowButton aria-label="Close">
            <CrossIcon size={17} stroke={1.1} />
          </WindowButton>
        </WindowControls>
      </TabStrip>
      <Toolbar>
        <ToolButton $muted aria-label="Back"><ArrowIcon /></ToolButton>
        <ToolButton $muted aria-label="Forward"><ArrowIcon flip /></ToolButton>
        <ToolButton aria-label="Reload"><ReloadIcon /></ToolButton>
        <Omnibox>
          <OmniButton aria-label="Site information"><InfoIcon /></OmniButton>
          <Address aria-label="Address" defaultValue="localhost:3000" />
          <OmniButton aria-label="Translate"><TranslateIcon /></OmniButton>
          <OmniButton aria-label="Share"><ShareIcon /></OmniButton>
          <OmniButton aria-label="Bookmark"><StarIcon /></OmniButton>
        </Omnibox>
        <ToolButton aria-label="Extensions"><PuzzleIcon /></ToolButton>
        <ToolButton aria-label="Side panel"><SidePanelIcon /></ToolButton>
        <ToolButton aria-label="Profile"><Avatar>A</Avatar></ToolButton>
        <ToolButton aria-label="Menu"><MenuDots /></ToolButton>
      </Toolbar>
      <Bookmarks>
        {bookmarks.map((b) => (
          <Bookmark key={b.label} href="#">
            {b.icon}
            {b.label}
          </Bookmark>
        ))}
        <MoreBookmarks aria-label="More bookmarks"><DoubleChevron /></MoreBookmarks>
      </Bookmarks>
    </BrowserFrame>
  );
}

function PostCarousel() {
  return (
    <>
      <Carousel>
        <ArrowCell $side="left">
          <ArrowButton $dim aria-label="Previous"><CircleArrow left /></ArrowButton>
        </ArrowCell>
        <Track>
          {posts.map((post) => (
            <Slide key={post.title}>
              <Card>
                <CardTitle>{post.title}</CardTitle>
                <CardBody>
                  <CardText>{post.body}</CardText>
                  <PrimaryButton $block>Read Comments</PrimaryButton>
                </CardBody>
              </Card>
            </Slide>
          ))}
          <Slide aria-hidden>
            <Card />
          </Slide>
        </Track>
        <ArrowCell $side="right">
          <ArrowButton aria-label="Next"><CircleArrow /></ArrowButton>
        </ArrowCell>
      </Carousel>
      <Dots>
        {Array.from({ length: PAGE_COUNT }, (_, i) => (
          <li key={i}>
            <Dot $active={i === 0} aria-label={`Slide ${i + 1}`} />
          </li>
        ))}
      </Dots>
    </>
  );
}

function AddPostDialog() {
  const [userId, setUserId] = useState("0");
  const [title, setTitle] = useState("");
  const [body, setBody] = useState("");
  return (
    <Mask>
      <Dialog role="dialog" aria-labelledby="dialog-title">
        <DialogClose aria-label="Close"><CrossIcon size={18} stroke={1.5} /></DialogClose>
        <DialogTitle id="dialog-title">Adding New Post</DialogTitle>
        <Form onSubmit={(e) => e.preventDefault()}>
          <Field>
            <Label htmlFor="userId">UserId</Label>
            <Control>
              <TextInput id="userId" value={userId} onChange={(e) => setUserId(e.target.value)} />
              <ErrorText>The userId must be a positive number</ErrorText>
            </Control>
          </Field>
          <Field>
            <Label htmlFor="title">Title</Label>
            <Control>
              <TextInput id="title" value={title} onChange={(e) => setTitle(e.target.value)} />
              <ErrorText>The title plays an important role, don`t forget to add it</ErrorText>
            </Control>
          </Field>
          <Field>
            <Label htmlFor="body">Body</Label>
            <Control>
              <TextArea id="body" value={body} onChange={(e) => setBody(e.target.value)} />
              <Counter>{body.length} / 200</Counter>
              <ErrorText>The description plays an important role, don`t forget to add it</ErrorText>
            </Control>
          </Field>
          <SubmitRow>
            <PrimaryButton $large type="submit">Send</PrimaryButton>
          </SubmitRow>
        </Form>
      </Dialog>
    </Mask>
  );
}

function Taskbar() {
  return (
    <TaskbarRoot>
      <SystemButton aria-label="Start"><WindowsIcon /></SystemButton>
      <SystemButton aria-label="Search"><SearchIcon /></SystemButton>
      <SystemButton aria-label="Task view"><TaskViewIcon /></SystemButton>
      <Apps>
        {apps.map((a) => (
          <AppButton key={a.label} aria-label={a.label} $running={a.running} $focused={a.focused}>
            {a.icon}
          </AppButton>
        ))}
      </Apps>
      <Weather>
        <SunIcon />
        <WeatherText>
          <span>19°C</span>
          <span>Sunny</span>
        </WeatherText>
      </Weather>
      {tray.map((t) => (
        <TrayButton key={t.label} aria-label={t.label}>{t.icon}</TrayButton>
      ))}
      <Language>POL</Language>
      <Clock>
        <span>16:14</span>
        <span>22.04.2023</span>
      </Clock>
      <Notifications aria-label="Notifications">
        <BubbleIcon />
        <Badge>1</Badge>
      </Notifications>
      <ShowDesktop aria-label="Show desktop" />
    </TaskbarRoot>
  );
}

export default function App() {
  return (
    <Screen>
      <GlobalStyle />
      <Browser />
      <Page>
        <PageHeader>
          <PageTitle>POSTS</PageTitle>
          <PrimaryButton>Add Post</PrimaryButton>
        </PageHeader>
        <PostCarousel />
        <AddPostDialog />
      </Page>
      <Taskbar />
    </Screen>
  );
}
